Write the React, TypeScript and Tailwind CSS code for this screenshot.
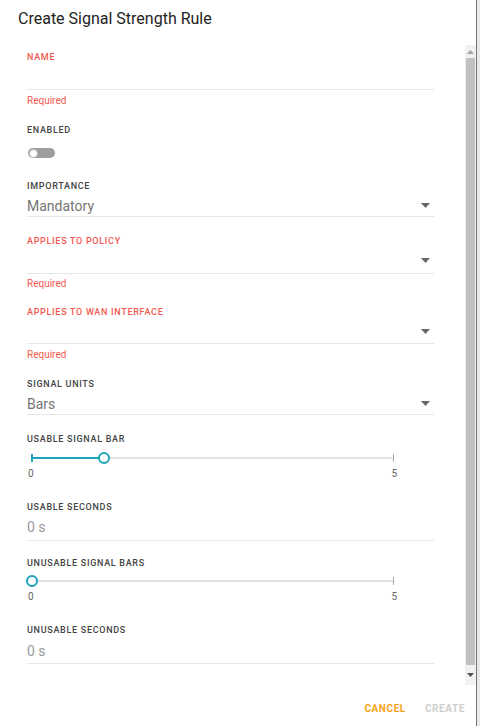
import React from "react";

const RED = "text-[#f25a4f]";

function Label({ children, red, className = "" }: { children: React.ReactNode; red?: boolean; className?: string }) {
  return (
    <div
      className={`h-3 text-[9px] leading-3 font-medium tracking-[0.7px] uppercase ${red ? RED : "text-[#444]"} ${className}`}
    >
      {children}
    </div>
  );
}

function Arrow() {
  return (
    <svg width="9" height="5" viewBox="0 0 9 5" className="mr-[4px]">
      <path d="M0 0 L9 0 L4.5 5 Z" fill="#666" />
    </svg>
  );
}

function Select({ value, h, arrowPb }: { value?: string; h: string; arrowPb: string }) {
  return (
    <div className={`${h} border-b border-[#e6e6e6] flex items-end justify-between`}>
      <span className="text-[14px] leading-5 text-[#757575]">{value ?? ""}</span>
      <div className={arrowPb}>
        <Arrow />
      </div>
    </div>
  );
}

function Slider({ pct }: { pct: number }) {
  return (
    <div className="w-[372px] px-[5px]">
      <div className="relative h-[14px]">
        <div className="absolute left-0 right-0 top-[6px] h-[2px] bg-[#e2e2e2]" />
        <div className="absolute left-0 top-[6px] h-[2px] bg-[#1ba3b8]" style={{ width: `${pct}%` }} />
        <div className="absolute left-0 top-[3px] w-[2px] h-[8px] -ml-[1px] bg-[#1ba3b8]" />
        <div className="absolute right-0 top-[3px] w-[1px] h-[8px] bg-[#aaa]" />
        <div
          className="absolute top-[1px] w-[12px] h-[12px] -ml-[6px] rounded-full border-2 border-[#1ba3b8] bg-white"
          style={{ left: `${pct}%` }}
        />
      </div>
      <div className="flex justify-between mt-[3px] -ml-[4px] -mr-[3px] text-[10px] leading-3 text-[#666]">
        <span>0</span>
        <span>5</span>
      </div>
    </div>
  );
}

export default function App() {
  return (
    <div className="w-[480px] h-[726px] flex bg-[#e8e8e8]" style={{ fontFamily: "Roboto, 'Liberation Sans', sans-serif" }}>
      <div className="w-[477px] h-full bg-white border-r border-[#777] flex flex-col">
        <div className="h-[45px] pl-[18px] pt-[9px]">
          <div className="text-[16px] leading-5 text-[#222]">Create Signal Strength Rule</div>
        </div>
        <div className="h-[640px] flex">
          <div className="flex-1 pl-[27px] pr-[31px]">
            <Label red className="mt-[6px]">Name</Label>
            <div className="h-[27px] border-b border-[#e6e6e6]" />
            <div className={`mt-[5px] h-3 text-[10px] leading-3 ${RED}`}>Required</div>

            <Label className="mt-[17px]">Enabled</Label>
            <div className="mt-[12px] h-[10px] w-[27px] rounded-full bg-[#9e9e9e] relative ml-[1px]">
              <div className="absolute left-[1px] top-[0.5px] w-[9px] h-[9px] rounded-full bg-white border border-[#bbb]" />
            </div>

            <Label className="mt-[22px]">Importance</Label>
            <Select value="Mandatory" h="h-[25px]" arrowPb="pb-[8px]" />

            <Label red className="mt-[18px]">Applies to policy</Label>
            <Select h="h-[27px]" arrowPb="pb-[10px]" />
            <div className={`mt-[4px] h-3 text-[10px] leading-3 ${RED}`}>Required</div>

            <Label red className="mt-[16px]">Applies to WAN interface</Label>
            <Select h="h-[26px]" arrowPb="pb-[9px]" />
            <div className={`mt-[5px] h-3 text-[10px] leading-3 ${RED}`}>Required</div>

            <Label className="mt-[17px]">Signal units</Label>
            <Select value="Bars" h="h-[25px]" arrowPb="pb-[8px]" />

            <Label className="mt-[18px]">Usable signal bar</Label>
            <div className="mt-[6px]">
              <Slider pct={20} />
            </div>

            <Label className="mt-[21px]">Usable seconds</Label>
            <div className="h-[28px] border-b border-[#e6e6e6] flex items-end pb-[3px]">
              <span className="text-[14px] leading-5 text-[#9a9a9a]">0 s</span>
            </div>

            <Label className="mt-[16px]">Unusable signal bars</Label>
            <div className="mt-[5px]">
              <Slider pct={0} />
            </div>

            <Label className="mt-[21px]">Unusable seconds</Label>
            <div className="h-[28px] border-b border-[#e6e6e6] flex items-end pb-[2px]">
              <span className="text-[14px] leading-5 text-[#9a9a9a]">0 s</span>
            </div>
          </div>
          <div className="w-[11px] bg-[#f1f1f1] flex flex-col">
            <div className="h-[13px] flex items-center justify-center">
              <svg width="7" height="4" viewBox="0 0 7 4">
                <path d="M0 4 L7 4 L3.5 0 Z" fill="#a3a3a3" />
              </svg>
            </div>
            <div className="mx-[1px] h-[607px] bg-[#c1c1c1]" />
            <div className="flex-1 flex items-center justify-center">
              <svg width="7" height="4" viewBox="0 0 7 4">
                <path d="M0 0 L7 0 L3.5 4 Z" fill="#505050" />
              </svg>
            </div>
          </div>
        </div>
        <div className="flex-1 flex items-center justify-end gap-[19px] pr-[11px] pt-[5px]">
          <span className="text-[10px] font-bold tracking-[0.6px] text-[#f7a21b]">CANCEL</span>
          <span className="text-[10px] font-bold tracking-[0.6px] text-[#cfcfcf]">CREATE</span>
        </div>
      </div>
    </div>
  );
}
